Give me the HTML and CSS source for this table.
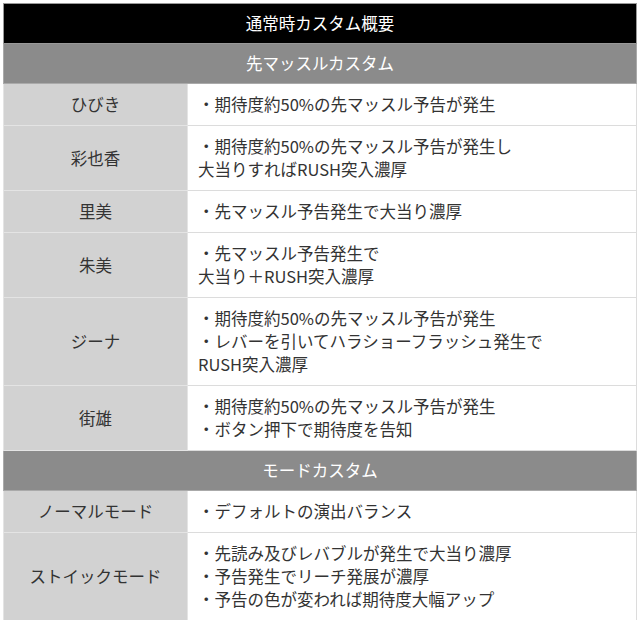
FILE: index.html
```html
<!DOCTYPE html>
<html lang="ja">
<head>
<meta charset="utf-8">
<link rel="stylesheet" href="styles.css">
</head>
<body>
<table class="custom">
  <colgroup><col class="col-name"><col class="col-desc"></colgroup>
  <tr><th class="title" colspan="2">通常時カスタム概要</th></tr>
  <tr><th class="section" colspan="2">先マッスルカスタム</th></tr>
  <tr><td class="name">ひびき</td><td class="desc">・期待度約50%の先マッスル予告が発生</td></tr>
  <tr><td class="name">彩也香</td><td class="desc">・期待度約50%の先マッスル予告が発生し<br>大当りすればRUSH突入濃厚</td></tr>
  <tr><td class="name">里美</td><td class="desc">・先マッスル予告発生で大当り濃厚</td></tr>
  <tr><td class="name">朱美</td><td class="desc">・先マッスル予告発生で<br>大当り＋RUSH突入濃厚</td></tr>
  <tr><td class="name">ジーナ</td><td class="desc">・期待度約50%の先マッスル予告が発生<br>・レバーを引いてハラショーフラッシュ発生で<br>RUSH突入濃厚</td></tr>
  <tr><td class="name">街雄</td><td class="desc">・期待度約50%の先マッスル予告が発生<br>・ボタン押下で期待度を告知</td></tr>
  <tr><th class="section" colspan="2">モードカスタム</th></tr>
  <tr><td class="name">ノーマルモード</td><td class="desc">・デフォルトの演出バランス</td></tr>
  <tr><td class="name">ストイックモード</td><td class="desc">・先読み及びレバブルが発生で大当り濃厚<br>・予告発生でリーチ発展が濃厚<br>・予告の色が変われば期待度大幅アップ</td></tr>
</table>
</body>
</html>
```
FILE: styles.css
```css
html, body {
  margin: 0;
  background: #fff;
}
body {
  padding: 3px;
  font-family: "Noto Sans CJK JP", "Noto Sans", sans-serif;
  font-size: 16.5px;
  color: #333;
}
.custom {
  width: 634px;
  border-collapse: collapse;
  border: 1px solid #ccc;
  table-layout: fixed;
}
.col-name { width: 184px; }
.custom th,
.custom td {
  border: 1px solid #dcdcdc;
  line-height: 23px;
  padding: 9px 10px;
  font-weight: normal;
  white-space: nowrap;
}
.custom .title {
  background: #000;
  color: #fff;
  padding: 8px 10px;
  border-color: #999;
}
.custom .section {
  background: #8b8b8b;
  color: #fff;
  padding: 8px 10px;
  border-color: #aaa;
}
.custom .name {
  background: #d2d2d2;
  text-align: center;
  border-color: #e4e4e4;
}
.custom .desc {
  background: #fff;
  text-align: left;
}
```
